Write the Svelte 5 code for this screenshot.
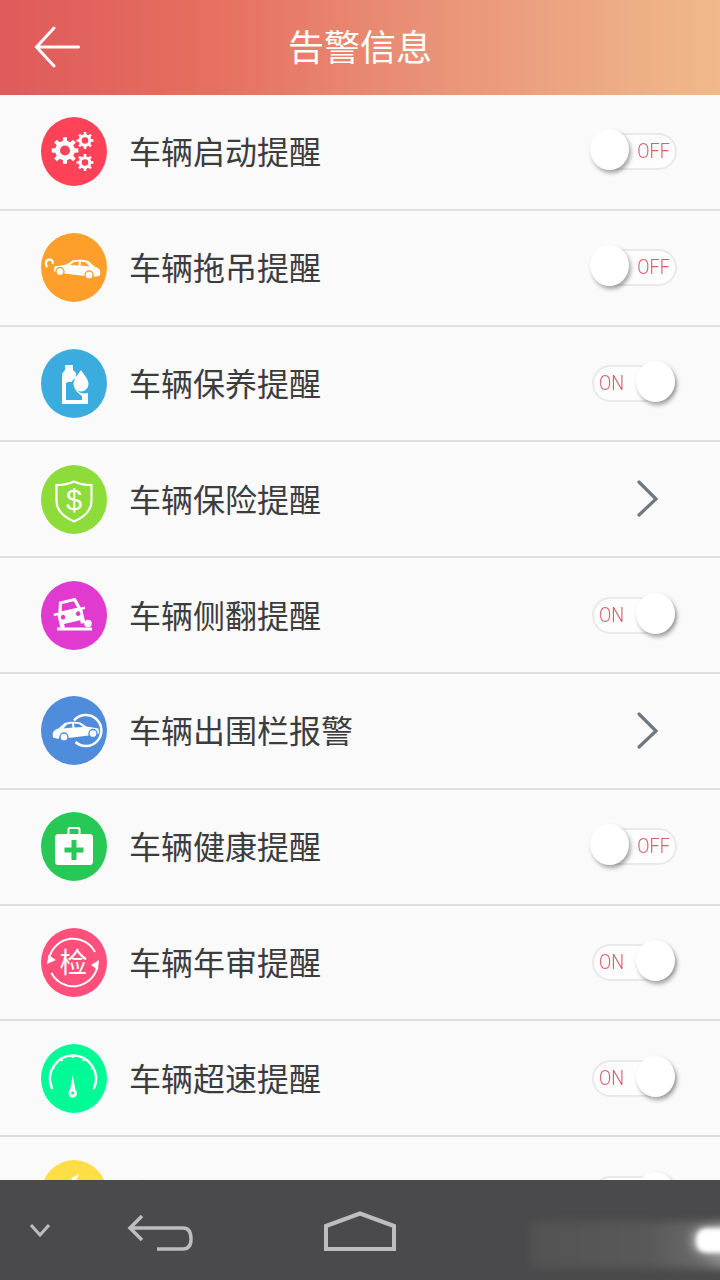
<script>
  const alerts = [
    { id: 'gears', label: '车辆启动提醒', color: '#ff4257', kind: 'off' },
    { id: 'tow', label: '车辆拖吊提醒', color: '#ff9f2b', kind: 'off' },
    { id: 'oil', label: '车辆保养提醒', color: '#3aacdd', kind: 'on' },
    { id: 'shield', label: '车辆保险提醒', color: '#8edc3a', kind: 'link' },
    { id: 'flip', label: '车辆侧翻提醒', color: '#e03ad0', kind: 'on' },
    { id: 'fence', label: '车辆出围栏报警', color: '#4f8cdb', kind: 'link' },
    { id: 'health', label: '车辆健康提醒', color: '#28c856', kind: 'off' },
    { id: 'inspect', label: '车辆年审提醒', color: '#ff4f7b', kind: 'on' },
    { id: 'speed', label: '车辆超速提醒', color: '#00fa95', kind: 'on' },
    { id: 'battery', label: '车辆电瓶提醒', color: '#ffdd44', kind: 'on' }
  ];

  // toothed outline plus a round hole, drawn with fill-rule evenodd
  function gearPath(cx, cy, outer, root, hole, teeth) {
    const step = (Math.PI * 2) / teeth;
    let d = '';
    for (let i = 0; i < teeth; i++) {
      const a = i * step;
      const pts = [
        [root, a - step * 0.5],
        [root, a - step * 0.28],
        [outer, a - step * 0.18],
        [outer, a + step * 0.18],
        [root, a + step * 0.28]
      ];
      for (const [r, t] of pts) {
        d += (d ? 'L' : 'M') + (cx + r * Math.cos(t)).toFixed(2) + ' ' + (cy + r * Math.sin(t)).toFixed(2);
      }
    }
    d += `ZM${cx + hole} ${cy}A${hole} ${hole} 0 1 0 ${cx - hole} ${cy}A${hole} ${hole} 0 1 0 ${cx + hole} ${cy}Z`;
    return d;
  }
</script>

{#snippet sedan(fill)}
  <path
    d="M1 8.500L13 6.500L19 2.500C24 1.500 30 1.500 35 3L41 8.500C44 9.500 46.500 11 46.800 13.500L46.500 17.500L41 19C40 14 33 13.500 31 18L11 15.500C9.500 10.500 3.500 10 2 14.500L0.500 13Z"
    fill="#fff"
  />
  <path d="M20.500 4L16.500 7L25 7.500L25.500 3.500ZM27.500 3.500L27 7.500L36 8.500L32.500 4.500Z" fill={fill} />
  <circle cx="6.500" cy="13.500" r="4" fill="#fff" stroke={fill} stroke-width="1.300" />
  <circle cx="35.500" cy="17" r="4" fill="#fff" stroke={fill} stroke-width="1.300" />
{/snippet}

{#snippet glyph(id, color)}
  {#if id === 'gears'}
    <path d={gearPath(24, 33.500, 13.500, 9.800, 5, 8)} fill="#fff" fill-rule="evenodd" />
    <path d={gearPath(44, 23.500, 8.500, 6.300, 3.300, 8)} fill="#fff" fill-rule="evenodd" />
    <path d={gearPath(44, 45.500, 8.500, 6.300, 3.300, 8)} fill="#fff" fill-rule="evenodd" />
  {:else if id === 'tow'}
    <path d="M6 34C3.500 30 5.500 26.500 8.500 26.500C11 26.500 12.500 29 11.500 31" fill="none" stroke="#fff" stroke-width="2.400" />
    <g transform="translate(12.500 25)">{@render sedan(color)}</g>
  {:else if id === 'oil'}
    <path d="M24 16H32V21L35 24V29C29 31 29 38 37 42C38 44 42 45 47 44V55H21V25L24 21Z" fill="#fff" />
    <path d="M25 34C28 32 30 33 31 33C32 38 35 43 41 47V51H25Z" fill={color} />
    <path d="M40 21C43 26 47.500 30 47.500 35A7.500 7.500 0 0 1 32.500 35C32.500 30 37 26 40 21Z" fill="#fff" />
  {:else if id === 'shield'}
    <path
      d="M15.500 20C24 20 29 18.500 33 16.500C37 18.500 42 20 50.500 20V36C50.500 46 42 52.500 33 56.500C24 52.500 15.500 46 15.500 36Z"
      fill="none"
      stroke="#fff"
      stroke-width="2.200"
    />
    <text class="dollar" x="33" y="45" text-anchor="middle">$</text>
  {:else if id === 'flip'}
    <g transform="rotate(-13 29 33)">
      <path d="M18 29L21 18.500H38L41 29H45V31.500H42V45H37.500V41.500H21V45H16.500V31.500H13V29Z" fill="#fff" />
      <path d="M21.500 28.500L23.500 21.500H35.500L37.500 28.500Z" fill={color} />
      <circle cx="21.500" cy="34.500" r="2.300" fill={color} />
      <circle cx="37" cy="34.500" r="2.300" fill={color} />
    </g>
    <rect x="16" y="46.500" width="35" height="3" fill="#fff" />
    <circle cx="47" cy="42.500" r="3.800" fill="#fff" />
  {:else if id === 'fence'}
    <path d="M33 24.500A15.500 15.500 0 1 1 34.500 46" fill="none" stroke="#fff" stroke-width="2.500" />
    <g transform="translate(58.500 24) scale(-1 1)">{@render sedan(color)}</g>
  {:else if id === 'health'}
    <path d="M27.500 22V17.500C27.500 16.500 28 16 29 16H37C38 16 38.500 16.500 38.500 17.500V22" fill="none" stroke="#fff" stroke-width="2" />
    <rect x="14" y="22" width="38" height="31" rx="3.500" fill="#fff" />
    <path d="M30.500 28H35.500V35.500H42.500V40.500H35.500V48H30.500V40.500H23.500V35.500H30.500Z" fill={color} />
  {:else if id === 'inspect'}
    <path d="M8.500 29A24.500 24.500 0 0 1 54 24" fill="none" stroke="#fff" stroke-width="2" />
    <path d="M56 40A24.500 24.500 0 0 1 10.500 45" fill="none" stroke="#fff" stroke-width="2" />
    <path d="M7.500 27L15 32L6 36Z" fill="#fff" />
    <path d="M57 42L50 37L58 32Z" fill="#fff" />
    <text class="stamp" x="32.500" y="44.500" text-anchor="middle">检</text>
  {:else if id === 'speed'}
    <path d="M11 44A23 23 0 1 1 53 44" fill="none" stroke="#fff" stroke-width="2.500" stroke-linecap="round" />
    <path d="M31.700 11.500V14M20 14.500L21.200 17M43.400 14.500L42.200 17M11.500 23L13.500 24.500M52 23L50 24.500" stroke="#fff" stroke-width="2" />
    <path d="M31.700 31L34.500 46A4.300 4.300 0 1 1 29 46Z" fill="#fff" />
    <circle cx="31.700" cy="49" r="1.600" fill={color} />
  {:else}
    <path d="M30 19C32 17 35 15 38 14L34 22Z" fill="#fff" />
  {/if}
{/snippet}

<div class="screen">
  <header class="topbar">
    <button class="back" aria-label="返回">
      <svg width="46" height="42" viewBox="0 0 46 42" fill="none" stroke="#fff" stroke-width="3" stroke-linecap="round">
        <path d="M20 2L2.500 21L20 40M3 21H44.500" />
      </svg>
    </button>
    <h1>告警信息</h1>
    <span></span>
  </header>

  <ul class="list">
    {#each alerts as item}
      <li class="row">
        <svg class="badge" width="66" height="69" viewBox="0 0 66 69">
          <ellipse cx="33" cy="34.500" rx="33" ry="34.500" fill={item.color} />
          {@render glyph(item.id, item.color)}
        </svg>
        <span class="label">{item.label}</span>
        {#if item.kind === 'link'}
          <svg class="chevron" width="24" height="40" viewBox="0 0 24 40" fill="none" stroke="#6f7880" stroke-width="3.200" stroke-linecap="round">
            <path d="M3 3L20 20L3 36" />
          </svg>
        {:else}
          <span class="switch" class:on={item.kind === 'on'}>
            <span class="state">{item.kind === 'on' ? 'ON' : 'OFF'}</span>
            <span class="knob"></span>
          </span>
        {/if}
      </li>
    {/each}
  </ul>

  <nav class="navbar">
    <svg class="nav-down" width="20" height="13" viewBox="0 0 20 13" fill="none" stroke="#bdbdbd" stroke-width="3">
      <path d="M1 1L10 11L19 1" />
    </svg>
    <svg class="nav-back" width="66" height="36" viewBox="0 0 66 36" fill="none" stroke="#bdbdbd" stroke-width="3.500">
      <path d="M15 1L3 13L15 25M3 13H56C62.500 13 64 18 64 24C64 30 62 34 56 34H30" />
    </svg>
    <svg class="nav-home" width="72" height="40" viewBox="0 0 72 40" fill="none" stroke="#bdbdbd" stroke-width="4">
      <path d="M2 38V15L36 2.500L70 15V38Z" />
    </svg>
    <span class="smudge"></span>
    <span class="glare"></span>
  </nav>
</div>

<style>
  :global(body) {
    background: #fafafa;
  }

  .screen {
    display: flex;
    flex-direction: column;
    width: 720px;
    height: 1280px;
    overflow: hidden;
    background: #fafafa;
    font-family: "Noto Sans CJK SC", "Noto Sans", sans-serif;
  }

  .topbar {
    display: grid;
    grid-template-columns: 1fr auto 1fr;
    align-items: center;
    flex: none;
    height: 95px;
    background: linear-gradient(90deg, #df5a5b 0%, #e6705f 30%, #e98d74 55%, #eeb088 90%, #f0b98a 100%);
  }

  .back {
    justify-self: start;
    display: flex;
    margin: -1px 0 0 34px;
    padding: 0;
    border: none;
    background: none;
  }

  h1 {
    margin: -6px 0 0;
    font-size: 36px;
    font-weight: 400;
    line-height: 1;
    color: #fff;
  }

  .list {
    flex: 1;
    min-height: 0;
    margin: 0;
    padding: 0;
    overflow: hidden;
    list-style: none;
  }

  .row {
    display: flex;
    align-items: center;
    box-sizing: border-box;
    height: 115.8px;
    padding: 0 43px 0 41px;
    border-bottom: 2px solid #dfdfdf;
  }

  .badge {
    flex: none;
  }

  .label {
    margin: -3px 0 0 22px;
    font-size: 32px;
    line-height: 1;
    color: #3c3c3c;
  }

  .chevron {
    margin-left: auto;
    margin-right: 17px;
  }

  .switch {
    position: relative;
    display: flex;
    align-items: center;
    justify-content: flex-end;
    box-sizing: border-box;
    width: 85px;
    height: 37px;
    margin-left: auto;
    padding: 0 5px;
    border: 2px solid #e9e9e9;
    border-radius: 19px;
    background: #fdfdfd;
  }

  .switch.on {
    justify-content: flex-start;
  }

  .state {
    font-family: Roboto, sans-serif;
    font-size: 21px;
    font-weight: 300;
    line-height: 1;
    color: #d5606c;
    transform: scaleX(0.86);
    transform-origin: right center;
  }

  .on .state {
    transform-origin: left center;
  }

  .knob {
    position: absolute;
    top: -6px;
    left: -4px;
    width: 39px;
    height: 41px;
    border-radius: 50%;
    background: #fff;
    box-shadow: 2px 3px 4px rgba(0, 0, 0, 0.35);
  }

  .on .knob {
    left: auto;
    right: 0;
  }

  .dollar {
    font-family: "Liberation Sans", sans-serif;
    font-size: 29px;
    fill: #fff;
  }

  .stamp {
    font-size: 28px;
    fill: #fff;
  }

  .navbar {
    position: relative;
    display: flex;
    align-items: flex-start;
    flex: none;
    height: 100px;
    overflow: hidden;
    background: #4a4a4c;
  }

  .nav-down {
    margin: 44px 0 0 30px;
  }

  .nav-back {
    margin: 35px 0 0 77px;
  }

  .nav-home {
    margin: 31px 0 0 131px;
  }

  .smudge {
    position: absolute;
    top: 42px;
    left: 530px;
    width: 200px;
    height: 46px;
    background: linear-gradient(90deg, #525352 0%, #585958 60%, #6a6b6a 85%, #9a9a9a 100%);
    filter: blur(5px);
  }

  .glare {
    position: absolute;
    top: 48px;
    left: 696px;
    width: 40px;
    height: 25px;
    border-radius: 10px;
    background: #fff;
    box-shadow: -4px 0 8px rgba(255, 255, 255, 0.45);
    filter: blur(2px);
  }
</style>
